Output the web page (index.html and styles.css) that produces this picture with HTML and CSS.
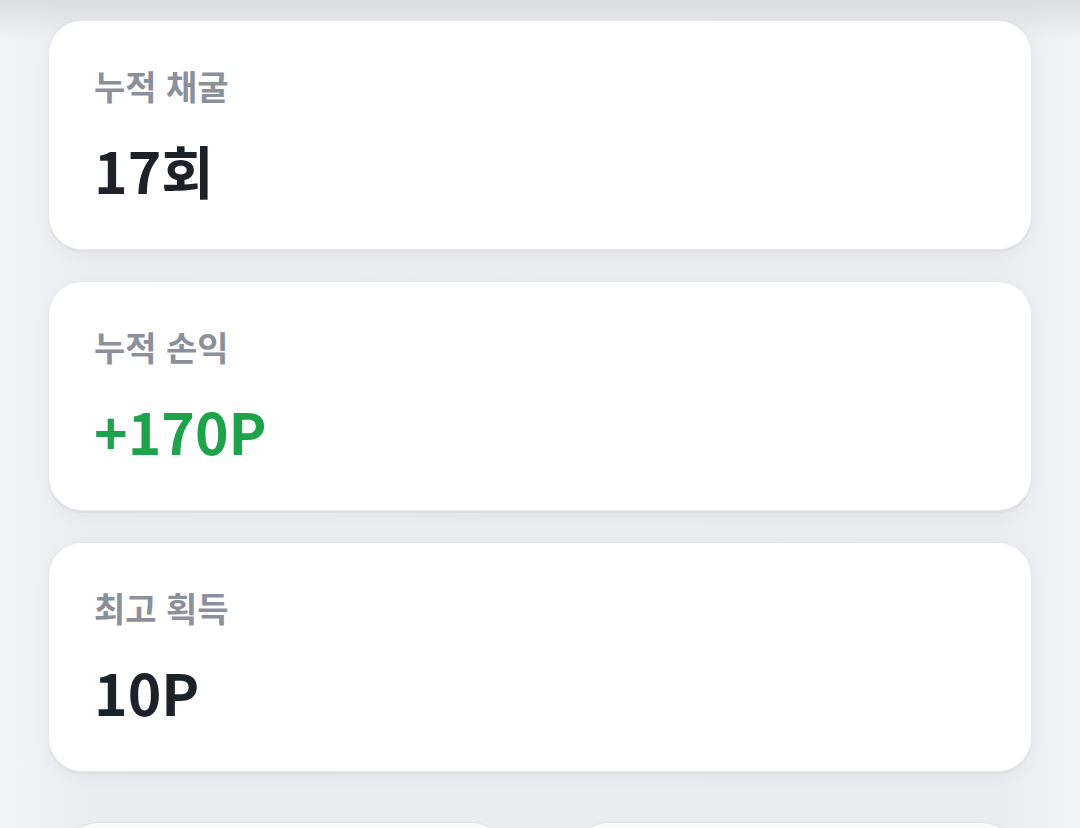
FILE: index.html
```html
<!DOCTYPE html>
<html lang="ko">
<head>
<meta charset="utf-8">
<link rel="stylesheet" href="styles.css">
</head>
<body>
<div class="page">
  <div class="topfade"></div>
  <div class="list">
    <div class="card">
      <div class="label">누적 채굴</div>
      <div class="value">17회</div>
    </div>
    <div class="card">
      <div class="label">누적 손익</div>
      <div class="value green">+170P</div>
    </div>
    <div class="card">
      <div class="label">최고 획득</div>
      <div class="value">10P</div>
    </div>
  </div>
  <div class="row">
    <div class="mini"></div>
    <div class="mini"></div>
  </div>
</div>
</body>
</html>
```
FILE: styles.css
```css
html, body {
  margin: 0;
  padding: 0;
  height: 100%;
  overflow: hidden;
}
body {
  background: linear-gradient(90deg, #f3f4f6 0%, #ebecef 8%, #eaebee 92%, #f3f4f6 100%);
  font-family: "Noto Sans CJK KR", "Noto Sans", sans-serif;
}
.page {
  position: relative;
  padding-top: 20px;
}
.topfade {
  position: absolute;
  left: 0;
  right: 0;
  top: 0;
  height: 40px;
  background: linear-gradient(180deg, #dcdde0 0%, rgba(234,235,238,0) 100%);
}
.list {
  position: relative;
  display: flex;
  flex-direction: column;
  gap: 31px;
  padding: 0 48px;
}
.card {
  background: #fff;
  border-radius: 34px;
  height: 230px;
  box-sizing: border-box;
  padding: 42px 45px 0;
  border: 1px solid #e6e7ea;
  box-shadow: 0 2px 0 #dfe0e4, 0 6px 16px rgba(0,0,0,0.03);
}
.label {
  font-size: 34px;
  font-weight: 700;
  color: #8b909b;
  line-height: 46px;
}
.value {
  margin-top: 25px;
  font-size: 57px;
  font-weight: 700;
  color: #1d2129;
  line-height: 70px;
}
.value.green {
  color: #1fa34a;
}
.row {
  display: grid;
  grid-template-columns: 1fr 1fr;
  gap: 68px;
  padding: 0 64px;
  margin-top: 50px;
}
.mini {
  height: 120px;
  background: #fafafb;
  border-radius: 34px;
  border: 1px solid #e2e3e6;
}
```
